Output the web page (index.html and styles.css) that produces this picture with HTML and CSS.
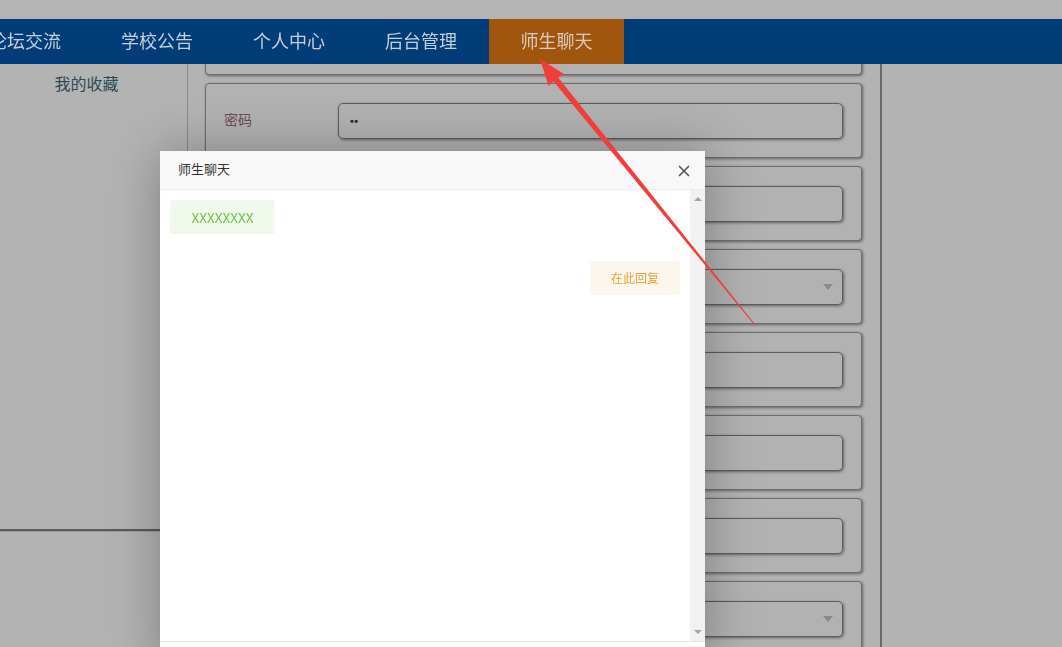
FILE: index.html
```html
<!DOCTYPE html>
<html lang="zh">
<head>
<meta charset="utf-8">
<title>师生聊天</title>
<link rel="stylesheet" href="styles.css">
</head>
<body>
<div class="page">
  <aside class="sidebar">
    <div class="side-item">我的收藏</div>
  </aside>
  <main class="main">
    <div class="card"><span class="label"></span><div class="input"></div></div>
    <div class="card"><span class="label">密码</span><div class="input"><span class="dots">••</span></div></div>
    <div class="card"><span class="label"></span><div class="input"></div></div>
    <div class="card"><span class="label"></span><div class="input select"><span class="caret"></span></div></div>
    <div class="card"><span class="label"></span><div class="input"></div></div>
    <div class="card"><span class="label"></span><div class="input"></div></div>
    <div class="card"><span class="label"></span><div class="input"></div></div>
    <div class="card"><span class="label"></span><div class="input select"><span class="caret"></span></div></div>
  </main>
  <div class="rest"></div>
</div>

<header class="header">
  <div class="topstrip"></div>
  <nav class="nav">
    <a class="nav-item first">论坛交流</a>
    <a class="nav-item">学校公告</a>
    <a class="nav-item">个人中心</a>
    <a class="nav-item">后台管理</a>
    <a class="nav-item active">师生聊天</a>
  </nav>
</header>

<div class="modal">
  <div class="modal-head">
    <span class="modal-title">师生聊天</span>
    <svg class="close" width="12" height="12" viewBox="0 0 12 12"><path d="M1 1 L11 11 M11 1 L1 11" stroke="#555" stroke-width="1.6" fill="none"/></svg>
  </div>
  <div class="modal-body">
    <div class="chat">
      <div class="msg left"><span class="bubble green">XXXXXXXX</span></div>
      <div class="msg right"><span class="bubble orange">在此回复</span></div>
    </div>
    <div class="scrollbar">
      <span class="sb-up"></span>
      <span class="sb-down"></span>
    </div>
  </div>
  <div class="modal-foot"></div>
</div>

<svg class="arrow" width="1062" height="647" viewBox="0 0 1062 647">
  <polygon points="540,59 548.5,86 553.6,81.4 754.6,325.3 755.4,324.7 558.2,77.6 564,74" fill="#f23d3d"/>
</svg>
</body>
</html>
```

FILE: styles.css
```css
html, body {
  margin: 0;
  padding: 0;
  height: 100%;
  overflow: hidden;
}
body {
  background: #b3b3b3;
  font-family: "Noto Sans CJK SC", "Noto Sans", "Liberation Sans", sans-serif;
}

.page {
  display: flex;
  align-items: flex-start;
}

.sidebar {
  width: 188px;
  height: 531px;
  border-right: 1px solid #8a8a8a;
  border-bottom: 2px solid #5a5a5a;
  box-shadow: 0 1px 0 #9c9c9c;
  box-sizing: border-box;
  padding-top: 72px;
}
.side-item {
  padding-right: 14px;
  text-align: center;
  font-size: 16px;
  line-height: 22px;
  color: #2c4a57;
}

.main {
  width: 694px;
  padding: 0 19px 0 17px;
  border-right: 2px solid #6a6a6a;
  box-sizing: border-box;
  display: flex;
  flex-direction: column;
  gap: 8px;
  height: 700px;
}
.card {
  height: 75px;
  width: 657px;
  flex: none;
  box-sizing: border-box;
  border: 1px solid #6e6e6e;
  border-radius: 4px;
  box-shadow: 1px 1px 3px rgba(0,0,0,0.45);
  display: flex;
  align-items: center;
  padding: 0 18px 0 18px;
  background: #b2b2b2;
}
.label {
  width: 114px;
  flex: none;
  font-size: 14px;
  line-height: 20px;
  margin-top: -3px;
  color: #6b4c57;
}
.input {
  width: 506px;
  height: 36px;
  box-sizing: border-box;
  border: 1px solid #5c5c5c;
  border-radius: 5px;
  box-shadow: 1px 1px 3px rgba(0,0,0,0.45);
  display: flex;
  align-items: center;
  padding: 0 11px;
}
.dots {
  font-family: "Liberation Sans", sans-serif;
  font-size: 11px;
  font-weight: bold;
  color: #2a2a2a;
  letter-spacing: 0.5px;
}
.select {
  justify-content: flex-end;
}
.caret {
  width: 0;
  height: 0;
  border-left: 5px solid transparent;
  border-right: 5px solid transparent;
  border-top: 6px solid #8a8a8a;
  margin-right: -2px;
}

.rest {
  flex: 1;
}

.header {
  position: fixed;
  top: 0;
  left: 0;
  right: 0;
}
.topstrip {
  height: 19px;
  background: #b4b4b4;
}
.nav {
  height: 45px;
  background: #003d79;
  display: flex;
}
.nav-item {
  width: 132px;
  text-align: center;
  line-height: 43px;
  font-size: 18px;
  color: #c6ced8;
  flex: none;
}
.nav-item.first {
  margin-left: -41px;
}
.nav-item.active {
  width: 135px;
  margin-left: 2px;
  background: #a0560f;
  color: #d8ccbf;
}

.modal {
  position: fixed;
  left: 160px;
  top: 151px;
  width: 545px;
  height: 520px;
  background: #fff;
  box-shadow: 1px 1px 50px rgba(0,0,0,0.3);
  display: flex;
  flex-direction: column;
}
.modal-head {
  height: 39px;
  flex: none;
  background: #f8f8f8;
  border-bottom: 1px solid #eee;
  box-sizing: border-box;
  display: flex;
  align-items: center;
  justify-content: space-between;
  padding: 0 15px 0 18px;
}
.modal-title {
  font-size: 13px;
  color: #333;
  margin-top: -4px;
}
.close {
  margin-top: 2px;
}
.modal-body {
  height: 451px;
  flex: none;
  display: flex;
}
.chat {
  flex: 1;
  padding: 10px;
  display: flex;
  flex-direction: column;
  gap: 27px;
}
.msg {
  display: flex;
}
.msg.right {
  justify-content: flex-end;
}
.bubble {
  display: inline-block;
  height: 34px;
  line-height: 34px;
  border-radius: 3px;
  text-align: center;
}
.green {
  width: 105px;
  font-size: 13.5px;
  background: #f0f9eb;
  color: #6cc642;
}
.orange {
  width: 90px;
  font-size: 12px;
  background: #fdf6ec;
  color: #e6a23c;
}
.scrollbar {
  width: 15px;
  background: #f1f1f1;
  display: flex;
  flex-direction: column;
  justify-content: space-between;
  align-items: center;
  padding: 7px 0 7px;
}
.sb-up {
  width: 0;
  height: 0;
  border-left: 4px solid transparent;
  border-right: 4px solid transparent;
  border-bottom: 4px solid #a3a3a3;
}
.sb-down {
  width: 0;
  height: 0;
  border-left: 4px solid transparent;
  border-right: 4px solid transparent;
  border-top: 4px solid #a3a3a3;
}
.modal-foot {
  border-top: 1px solid #e8e8e8;
  flex: 1;
}

.arrow {
  position: fixed;
  left: 0;
  top: 0;
  pointer-events: none;
}
```
